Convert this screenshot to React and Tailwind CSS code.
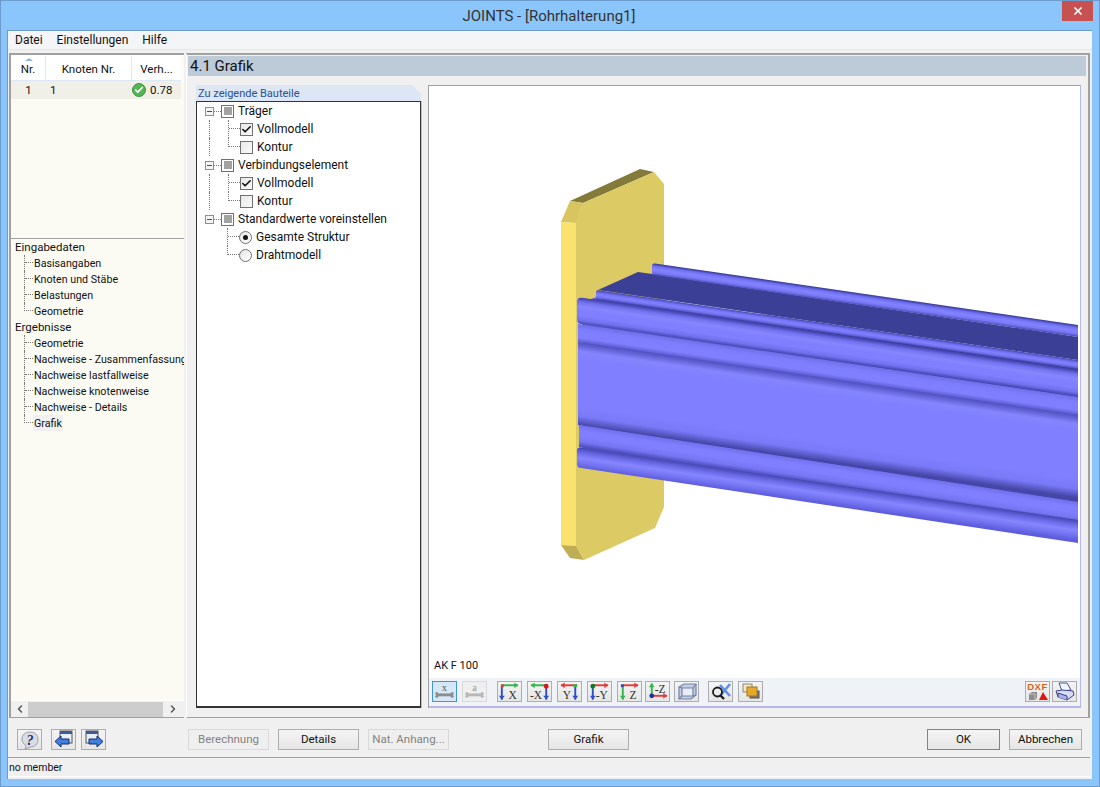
import { Fragment } from 'react';
import { Check, X, ChevronLeft, ChevronRight } from 'lucide-react';

const FONT = 'font-["Roboto",sans-serif]';

// Beam bands, given as y on the left end (x0) and at x=1078, with the shading across them
const BANDS = [
  { x0: 652, l: [263, 275], r: [325, 337], round: 3, stops: ['#34368e', '#7070f4', '#8484ff', '#7878f8', '#4a4cb0'] },
  { x0: 596, l: [290, 300], r: [360, 370], round: 2, stops: ['#4244a8', '#7070f4', '#8282ff', '#6a6ae8', '#2e3086'] },
  { x0: 577, l: [297, 324], r: [370, 397], round: 5, stops: ['#3e3ea8', '#7272f0', '#8686ff', '#7f7fff', '#7f7fff', '#7272f0', '#4040a8'] },
  { x0: 578, l: [324, 342], r: [397, 415], round: 0, stops: ['#6e6ee8', '#7c7cfc', '#7f7fff', '#7f7fff', '#5c5cd0'] },
  { x0: 578, l: [342, 425], r: [415, 502], round: 0, stops: ['#5050c0', '#8585ff', '#7f7fff', '#7f7fff', '#7f7fff', '#7f7fff', '#7f7fff', '#7f7fff', '#7a7af8', '#4646a8'] },
  { x0: 579, l: [425, 447], r: [502, 520], round: 0, stops: ['#7070ee', '#7f7fff', '#7f7fff', '#7676f4', '#4848b4'] },
  { x0: 577, l: [447, 468], r: [520, 543], round: 4, stops: ['#4646b0', '#6a6ae8', '#8686ff', '#7474f2', '#5c5cdc'] },
];

const bandPath = (b) => {
  const s = (b.r[0] - b.l[0]) / (1078 - b.x0);
  const c = b.round;
  if (!c) return `M${b.x0} ${b.l[0]} L1078 ${b.r[0]} L1078 ${b.r[1]} L${b.x0} ${b.l[1]} Z`;
  return `M${b.x0} ${b.l[0] + c} Q${b.x0} ${b.l[0]} ${b.x0 + c} ${b.l[0] + s * c} L1078 ${b.r[0]} L1078 ${b.r[1]} L${b.x0 + c} ${b.l[1]} Q${b.x0} ${b.l[1]} ${b.x0} ${b.l[1] - c} Z`;
};

const Beam = () => (
  <svg viewBox="429 86 650 592" className="w-[650px] h-[592px] block">
    <defs>
      {BANDS.map((b, i) => {
        const s = (b.r[0] - b.l[0]) / (1078 - b.x0);
        const h = b.l[1] - b.l[0];
        const dy = h / (1 + s * s);
        return (
          <linearGradient key={i} id={`band${i}`} gradientUnits="userSpaceOnUse" x1={b.x0} y1={b.l[0]} x2={b.x0 - s * dy} y2={b.l[0] + dy}>
            {b.stops.map((c, j) => (
              <stop key={j} offset={j / (b.stops.length - 1)} stopColor={c} />
            ))}
          </linearGradient>
        );
      })}
    </defs>
    {/* end plate */}
    <polygon points="570,201 640,169 654,172 583,203" fill="#847a3a" />
    <polygon points="583,203 654,172 664,184 664,507 655,528 584,560 576,546 576,222" fill="#dcca64" />
    <polygon points="561,222 570,201 583,203 576,223" fill="#d8c560" />
    <polygon points="561,222 576,223 576,546 561,545" fill="#f9e26e" />
    <polygon points="561,545 576,546 584,560 570,558" fill="#bfae55" />
    {/* beam: solid underlay so the band seams don't show the plate through */}
    <polygon points="638,272 652,274 1078,337 1078,360 598,290" fill="#3c3f96" />
    <polygon points="600,296 1078,369 1078,540 582,466 582,302" fill="#5c5cd0" />
    {BANDS.map((b, i) => (
      <path key={i} d={bandPath(b)} fill={`url(#band${i})`} />
    ))}
  </svg>
);

const Arrow = ({ x1, y1, x2, y2, color }) => {
  const horizontal = y1 === y2;
  const dir = horizontal ? Math.sign(x2 - x1) : Math.sign(y2 - y1);
  const head = horizontal
    ? `${x2},${y2} ${x2 - dir * 4},${y2 - 3} ${x2 - dir * 4},${y2 + 3}`
    : `${x2},${y2} ${x2 - 3},${y2 - dir * 4} ${x2 + 3},${y2 - dir * 4}`;
  return (
    <g>
      <line x1={x1} y1={y1} x2={x2} y2={y2} stroke={color} strokeWidth="2" />
      <polygon points={head} fill={color} />
    </g>
  );
};

const BLUE = '#2c4fc8';
const RED = '#e43a3a';
const GREEN = '#2fb84a';

const AxisIcon = ({ label, children, tx, ty = 17 }) => (
  <svg width="24" height="19" viewBox="0 0 24 19">
    {children}
    <text x={tx} y={ty} fontSize="12" fontFamily="Liberation Serif, serif" fill="#333">{label}</text>
  </svg>
);

const AXIS_ICONS = [
  <AxisIcon key="x" label="X" tx={11}>
    <Arrow x1={4} y1={3} x2={21} y2={3} color={GREEN} />
    <Arrow x1={4} y1={4} x2={4} y2={18} color={BLUE} />
    <rect x="3" y="2" width="3" height="3" fill={RED} />
  </AxisIcon>,
  <AxisIcon key="-x" label="-X" tx={2}>
    <Arrow x1={19} y1={3} x2={3} y2={3} color={GREEN} />
    <Arrow x1={19} y1={4} x2={19} y2={18} color={BLUE} />
    <circle cx="19" cy="4" r="2.5" fill="#d81818" />
  </AxisIcon>,
  <AxisIcon key="y" label="Y" tx={5}>
    <Arrow x1={20} y1={3} x2={3} y2={3} color={RED} />
    <Arrow x1={18} y1={4} x2={18} y2={18} color={BLUE} />
    <rect x="16" y="2" width="4" height="3" fill={GREEN} />
  </AxisIcon>,
  <AxisIcon key="-y" label="-Y" tx={8}>
    <Arrow x1={5} y1={3} x2={21} y2={3} color={RED} />
    <Arrow x1={5} y1={4} x2={5} y2={18} color={BLUE} />
    <circle cx="5" cy="4" r="2.5" fill="#127a2c" />
  </AxisIcon>,
  <AxisIcon key="z" label="Z" tx={12}>
    <Arrow x1={4} y1={3} x2={21} y2={3} color={RED} />
    <Arrow x1={5} y1={4} x2={5} y2={18} color={GREEN} />
    <rect x="3" y="2" width="3" height="3" fill={BLUE} />
  </AxisIcon>,
  <AxisIcon key="-z" label="-Z" tx={9} ty={11}>
    <Arrow x1={6} y1={14} x2={6} y2={1} color={GREEN} />
    <Arrow x1={6} y1={14} x2={22} y2={14} color={RED} />
    <circle cx="6" cy="14" r="2.5" fill="#1c2f9c" />
  </AxisIcon>,
];

const CubeIcon = () => (
  <svg width="22" height="19" viewBox="0 0 22 19" stroke="#7484a6" strokeWidth="1.2">
    <path d="M3 5 L8 2 H20 V13 L15 17 H3 Z" fill="#c3cee2" />
    <path d="M6 6 H17 V14 H6 Z" fill="#e8edf6" />
    <path d="M3 5 L6 6 M17 6 L20 2 M17 14 L20 13 M6 14 L3 17" />
  </svg>
);

const ResetIcon = () => (
  <svg width="22" height="19" viewBox="0 0 22 19">
    <path d="M10 3 L20 14 M20 2 L10 14" stroke="#5f8fe6" strokeWidth="2.6" />
    <circle cx="7.5" cy="10" r="4.5" fill="none" stroke="#1c1c1c" strokeWidth="1.8" />
    <path d="M10.5 13.5 L14 17" stroke="#1c1c1c" strokeWidth="2.4" />
  </svg>
);

const LayersIcon = () => (
  <svg width="20" height="18" viewBox="0 0 20 18">
    <rect x="2" y="2" width="9" height="8" fill="#f4e6c0" stroke="#8a8a8a" />
    <rect x="9" y="9" width="9" height="7" fill="#70757c" stroke="#555" />
    <rect x="6" y="5" width="10" height="9" fill="#e5a92c" stroke="#a37a1c" />
  </svg>
);

const MemberIcon = ({ label, color, textColor }) => (
  <svg width="24" height="19" viewBox="0 0 24 19">
    <text x="12" y="9" textAnchor="middle" fontSize="11" fontFamily="Liberation Serif, serif" fill={textColor}>{label}</text>
    <path d="M4 13 H20" stroke={color} strokeWidth="3" />
    <circle cx="4" cy="11.5" r="1.6" fill={color} />
    <circle cx="4" cy="14.5" r="1.6" fill={color} />
    <circle cx="20" cy="11.5" r="1.6" fill={color} />
    <circle cx="20" cy="14.5" r="1.6" fill={color} />
  </svg>
);

const DxfIcon = () => (
  <div className="flex flex-col items-center leading-none">
    <span className="text-[9.5px] font-bold text-[#d2651e] font-['Liberation_Sans',sans-serif] leading-[9px] tracking-[0.5px]">DXF</span>
    <svg width="20" height="10" viewBox="0 0 20 10">
      <path d="M1 3 L4 1 H9 V7 L7 9 H1 Z" fill="#8d8d8d" />
      <path d="M1 3 H7 V9" fill="none" stroke="#d0d0d0" strokeWidth="0.8" />
      <polygon points="15,1 20,9 11,9" fill="#e01616" />
    </svg>
  </div>
);

const PrinterIcon = () => (
  <svg width="21" height="19" viewBox="0 0 21 19">
    <path d="M5 1 L13 1 L17 8 L8 9 Z" fill="#f4f6ff" stroke="#4a4f8c" />
    <path d="M2 9 L8 8 L19 9 L20 13 L13 18 L4 15 Z" fill="#d7dcf6" stroke="#3c4180" />
    <path d="M4 15 L4 11 L13 14 L13 18" fill="#aab2e8" stroke="#3c4180" />
  </svg>
);

const HelpIcon = () => (
  <svg width="20" height="20" viewBox="0 0 20 20">
    <path d="M10 2 C15 2 18 5 18 9.5 C18 14 15 17 10 17 L5 19 L6 15.5 C3.5 14 2 12 2 9.5 C2 5 5 2 10 2 Z" fill="#d9dce2" stroke="#9a9fa8" />
    <text x="10" y="15" textAnchor="middle" fontSize="14" fontWeight="bold" fontStyle="italic" fontFamily="Liberation Serif, serif" fill="#1f2f6a">?</text>
  </svg>
);

const WindowArrowIcon = ({ right }) => (
  <svg width="22" height="20" viewBox="0 0 22 20">
    <rect x={right ? 3 : 7} y="1" width="12" height="12" fill="#e9edf6" stroke="#555" />
    <rect x={right ? 3 : 7} y="1" width="12" height="3" fill="#3d5a9c" />
    <path
      d={right ? 'M6 9 H14 V6 L20 11.5 L14 17 V14 H6 Z' : 'M16 9 H8 V6 L2 11.5 L8 17 V14 H16 Z'}
      fill="#3f7fe0"
      stroke="#12296c"
    />
  </svg>
);

const IconButton = ({ children, active, disabled, className = '' }) => (
  <div
    className={`w-[25px] h-[21px] shrink-0 flex items-center justify-center border overflow-hidden ${
      active
        ? 'border-[#3d95e0] bg-[#d6e8f8]'
        : disabled
          ? 'border-[#d9d9d9] bg-[#efefef]'
          : 'border-[#adadad] bg-gradient-to-b from-[#f4f4f4] to-[#e6e6e6]'
    } ${className}`}
  >
    {children}
  </div>
);

const Btn = ({ children, disabled, primary, className = '' }) => (
  <div
    className={`h-[21px] flex items-center justify-center border whitespace-nowrap text-[11.5px] ${
      disabled
        ? 'border-[#d9d9d9] bg-[#efefef] text-[#838383]'
        : primary
          ? 'border-[#3d95e0] bg-gradient-to-b from-[#f4f4f4] to-[#e6e6e6] text-[#111]'
          : 'border-[#adadad] bg-gradient-to-b from-[#f4f4f4] to-[#e6e6e6] text-[#111]'
    } ${className}`}
  >
    {children}
  </div>
);

// Dotted elbow from the parent's vertical line to a child row
const Elbow = ({ last, left, width = 'w-[9px]' }) => (
  <span className={`self-stretch shrink-0 ${left} ${width} ${last ? '' : 'border-l border-dotted border-[#777]'}`}>
    <span className={`block h-1/2 ${last ? 'border-l' : ''} border-b border-dotted border-[#777]`} />
  </span>
);

const NAV = [
  { title: 'Eingabedaten', items: ['Basisangaben', 'Knoten und Stäbe', 'Belastungen', 'Geometrie'] },
  { title: 'Ergebnisse', items: ['Geometrie', 'Nachweise - Zusammenfassung', 'Nachweise lastfallweise', 'Nachweise knotenweise', 'Nachweise - Details', 'Grafik'] },
];

const NavTree = () => (
  <div className="flex-1 min-h-0 bg-[#fbfbf3] border-t border-[#a0a0a0] overflow-hidden text-[10.7px] text-[#111]">
    {NAV.map((group) => (
      <Fragment key={group.title}>
        <div className="h-4 pl-[4px] leading-4 text-[11.5px]">{group.title}</div>
        {group.items.map((item, i) => (
          <div key={item} className="h-4 flex leading-[17px] whitespace-nowrap">
            <Elbow last={i === group.items.length - 1} left="ml-[13px]" width="w-[9px]" />
            <span className={`px-px ${item === 'Grafik' ? 'bg-[#f0f0f0]' : ''}`}>{item}</span>
          </div>
        ))}
      </Fragment>
    ))}
  </div>
);

const TriState = () => (
  <span className="w-[13px] h-[13px] shrink-0 border border-[#707070] bg-white flex items-center justify-center">
    <span className="w-[8px] h-[8px] bg-[#a2a2a2]" />
  </span>
);

const CheckBox = ({ checked }) => (
  <span className="w-[13px] h-[13px] shrink-0 border border-[#707070] bg-gradient-to-br from-[#e8e8e8] to-[#fafafa] flex items-center justify-center">
    {checked && <Check size={11} strokeWidth={3.5} className="text-[#111]" />}
  </span>
);

const Radio = ({ checked }) => (
  <span className="w-[13px] h-[13px] shrink-0 rounded-full border border-[#707070] bg-gradient-to-br from-[#e4e4e4] to-white flex items-center justify-center">
    {checked && <span className="w-[5px] h-[5px] rounded-full bg-[#111]" />}
  </span>
);

const PARTS = [
  {
    title: 'Träger',
    items: [
      { label: 'Vollmodell', checked: true },
      { label: 'Kontur' },
    ],
  },
  {
    title: 'Verbindungselement',
    items: [
      { label: 'Vollmodell', checked: true },
      { label: 'Kontur' },
    ],
  },
  {
    title: 'Standardwerte voreinstellen',
    radio: true,
    items: [
      { label: 'Gesamte Struktur', checked: true },
      { label: 'Drahtmodell' },
    ],
  },
];

const PartsTree = () => (
  <div className="w-[225px] shrink-0 flex flex-col">
    <div className="h-[16px] w-[225px] bg-[#dce6f5] [clip-path:polygon(0_0,216px_0,225px_9px,225px_100%,0_100%)] pl-[2px] text-[11px] leading-[17px] text-[#2b4f8f]">
      Zu zeigende Bauteile
    </div>
    <div className="h-[607px] border border-b-2 border-[#333] shadow-[1px_0_0_#b4b8ea] bg-white text-[12px] text-[#111]">
      {PARTS.map((part, idx) => {
        const lastPart = idx === PARTS.length - 1;
        return (
          <Fragment key={part.title}>
            <div className="h-[18px] flex items-center leading-[18px]">
              <span className="w-[1px] ml-[7px]" />
              <span className="w-[9px] h-[9px] shrink-0 border border-[#8a8f98] bg-[#f4f4f6] flex items-center justify-center">
                <span className="w-[5px] h-px bg-[#2f4f9f]" />
              </span>
              <span className="w-[7px] border-b border-dotted border-[#777]" />
              <TriState />
              <span className="ml-[4px] whitespace-nowrap">{part.title}</span>
            </div>
            {part.items.map((item, i) => (
              <div key={item.label} className="h-[18px] flex items-center leading-[18px]">
                <span className={`self-stretch shrink-0 ml-[12px] w-0 ${lastPart ? '' : 'border-l border-dotted border-[#777]'}`} />
                <Elbow last={i === part.items.length - 1} left="ml-[18px]" width="w-[12px]" />
                {part.radio ? <Radio checked={item.checked} /> : <CheckBox checked={item.checked} />}
                <span className="ml-[4px] whitespace-nowrap">{item.label}</span>
              </div>
            ))}
          </Fragment>
        );
      })}
    </div>
  </div>
);

const GraphicsPanel = () => (
  <div className="w-[653px] h-[623px] shrink-0 ml-[7px] flex flex-col border-t border-l border-[#a0a0a0] border-r border-r-[#b4b8ea] shadow-[inset_0_-1px_0_#b4b8ea] bg-white">
    <div className="relative h-[592px] overflow-hidden">
      <Beam />
      <span className="absolute left-[5px] bottom-[4px] text-[11px] text-[#111]">AK F 100</span>
    </div>
    <div className="h-[29px] bg-[#eff3f8] flex items-center pl-[3px] pr-[3px] pb-[2px] border-b border-[#b4b8ea]">
      <IconButton active><MemberIcon label="x" color="#8d8d8d" textColor="#555" /></IconButton>
      <IconButton disabled className="ml-[5px]"><MemberIcon label="a" color="#b8b8b8" textColor="#999" /></IconButton>
      <div className="flex ml-[10px] gap-[5px]">
        {AXIS_ICONS.slice(0, 5).map((icon, i) => (
          <IconButton key={i}>{icon}</IconButton>
        ))}
      </div>
      <IconButton className="ml-[3px]">{AXIS_ICONS[5]}</IconButton>
      <IconButton className="ml-[4px]"><CubeIcon /></IconButton>
      <IconButton className="ml-[9px]"><ResetIcon /></IconButton>
      <IconButton className="ml-[5px]"><LayersIcon /></IconButton>
      <div className="ml-auto flex gap-[2px]">
        <IconButton><DxfIcon /></IconButton>
        <IconButton><PrinterIcon /></IconButton>
      </div>
    </div>
  </div>
);

const CaseTable = () => (
  <div className="h-[182px] bg-[#fbfbf3] text-[12px] text-[#111]">
    <div className="w-[170px] h-[25px] bg-white flex items-center border-b border-[#dbe8f6] text-center text-[11.5px]">
      <div className="relative w-[35px] h-full leading-[27px] border-r border-[#dbe8f6]">
        <span className="absolute left-[14px] top-[2px] w-0 h-0 border-x-[4px] border-x-transparent border-b-[3px] border-b-[#8fb4d8]" />
        Nr.
      </div>
      <div className="w-[86px] h-full leading-[27px] border-r border-[#dbe8f6]">Knoten Nr.</div>
      <div className="w-[49px] h-full leading-[27px]">Verh...</div>
    </div>
    <div className="w-[170px] h-[18px] bg-[#f0f0e8] flex items-center leading-[18px] text-[11.5px]">
      <span className="w-[35px] text-center">1</span>
      <span className="w-[86px] pl-[4px]">1</span>
      <span className="flex items-center">
        <span className="w-[14px] h-[14px] rounded-full bg-[#55b455] border border-[#3f9440] flex items-center justify-center">
          <Check size={10} strokeWidth={4} className="text-white" />
        </span>
        <span className="ml-[4px]">0.78</span>
      </span>
    </div>
  </div>
);

export default function App() {
  return (
    <div className={`w-[1100px] h-[787px] flex flex-col bg-[#8ac6fb] border border-[#6d9ccc] ${FONT}`}>
      <div className="h-[29px] shrink-0 grid grid-cols-[1fr_auto_1fr] pr-[6px]">
        <div />
        <div className="pl-[4px] text-[15px] text-[#333] leading-[30px]">JOINTS - [Rohrhalterung1]</div>
        <div className="flex justify-end">
          <div className="w-[31px] h-[20px] bg-[#c75050] flex items-center justify-center">
            <X size={12} strokeWidth={3.5} className="text-white" />
          </div>
        </div>
      </div>

      <div className="ml-[6px] mr-[7px] h-[749px] flex flex-col bg-[#f0f0f0] border-t border-l border-[#6d9ccc]">
        <div className="h-[19px] shrink-0 bg-[#f4f5f7] border-b border-[#e6e6e6] flex items-center pl-[7px] gap-[14px] text-[12px] text-[#111]">
          <span>Datei</span>
          <span>Einstellungen</span>
          <span>Hilfe</span>
        </div>

        <div className="h-[665px] mt-[3px] shrink-0 flex">
          <div className="ml-[1px] w-[175px] shrink-0 flex flex-col border-t-2 border-l-2 border-[#a0a0a0] border-b border-b-[#a0a0a0] bg-white pt-px">
            <CaseTable />
            <NavTree />
            <div className="h-[17px] shrink-0 bg-[#f0f0f0] flex items-center border-t border-white text-[#555]">
              <span className="w-[17px] flex justify-center"><ChevronLeft size={12} strokeWidth={3} /></span>
              <span className="w-[135px] h-[15px] bg-[#cdcdcd]" />
              <span className="w-[19px] flex justify-center"><ChevronRight size={12} strokeWidth={3} /></span>
            </div>
          </div>

          <div className="ml-[2px] w-[904px] shrink-0 flex flex-col border-t-2 border-b border-r-2 border-[#a0a0a0] pt-px pl-px border-l border-l-white">
            <div className="h-[20px] w-[898px] shrink-0 bg-[#bdcbd9] pl-[2px] text-[15px] leading-[21px] text-[#111]">4.1 Grafik</div>
            <div className="flex mt-[9px] ml-[8px]">
              <PartsTree />
              <GraphicsPanel />
            </div>
          </div>
        </div>

        <div className="h-[39px] shrink-0 flex items-start pt-[11px] pl-[9px]">
          <IconButton><HelpIcon /></IconButton>
          <IconButton className="ml-[9px]"><WindowArrowIcon /></IconButton>
          <IconButton className="ml-[5px]"><WindowArrowIcon right /></IconButton>
          <Btn disabled className="w-[81px] ml-[82px]">Berechnung</Btn>
          <Btn className="w-[81px] ml-[9px]">Details</Btn>
          <Btn disabled className="w-[81px] ml-[9px]">Nat. Anhang...</Btn>
          <Btn className="w-[81px] ml-[99px]">Grafik</Btn>
          <Btn primary className="w-[73px] ml-[298px]">OK</Btn>
          <Btn className="w-[73px] ml-[9px]">Abbrechen</Btn>
        </div>

        <div className="flex-1 border-t border-[#a0a0a0] mr-[2px]">
          <div className="h-[19px] leading-[19px] pl-px text-[10.5px] text-[#111] border-b border-white">no member</div>
        </div>
      </div>
      <div className="flex-1" />
    </div>
  );
}
